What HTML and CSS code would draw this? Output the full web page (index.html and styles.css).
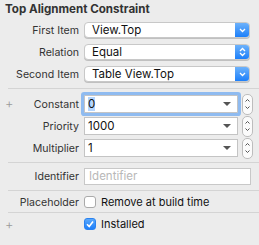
FILE: index.html
```html
<!DOCTYPE html>
<html lang="en">
<head>
    <meta charset="UTF-8">
    <title>Top Alignment Constraint</title>
    <link rel="stylesheet" href="styles.css">
</head>
<body>

    <div class="panel">
        <div class="title">Top Alignment Constraint</div>

        <div class="row pop-row">
            <div class="lbl"><span></span><span>First Item</span></div>
            <div class="popup">
                <span class="val">View.Top</span>
                <span class="pbtn"><svg width="7" height="5" viewBox="0 0 7 5"><path d="M1 1 L3.5 3.5 L6 1" fill="none" stroke="#fff" stroke-width="1.3"/></svg></span>
            </div>
        </div>

        <div class="row pop-row">
            <div class="lbl"><span></span><span>Relation</span></div>
            <div class="popup">
                <span class="val">Equal</span>
                <span class="pbtn"><svg width="7" height="10" viewBox="0 0 7 10"><path d="M1 4 L3.5 1.5 L6 4 M1 6 L3.5 8.5 L6 6" fill="none" stroke="#fff" stroke-width="1.3"/></svg></span>
            </div>
        </div>

        <div class="row pop-row">
            <div class="lbl"><span></span><span>Second Item</span></div>
            <div class="popup">
                <span class="val">Table View.Top</span>
                <span class="pbtn"><svg width="7" height="5" viewBox="0 0 7 5"><path d="M1 1 L3.5 3.5 L6 1" fill="none" stroke="#fff" stroke-width="1.3"/></svg></span>
            </div>
        </div>

        <div class="sep"></div>

        <div class="row combo-row">
            <div class="lbl"><span class="plus">+</span><span>Constant</span></div>
            <div class="combo focus">
                <span class="val"><span class="sel">0</span></span>
                <span class="tri"></span>
            </div>
            <div class="stepper"><svg width="9" height="18" viewBox="0 0 9 18"><path d="M2.5 6.5 L4.5 4.5 L6.5 6.5 M2.5 11.5 L4.5 13.5 L6.5 11.5" fill="none" stroke="#555" stroke-width="1"/></svg></div>
        </div>

        <div class="row combo-row">
            <div class="lbl"><span></span><span>Priority</span></div>
            <div class="combo">
                <span class="val">1000</span>
                <span class="tri"></span>
            </div>
            <div class="stepper"><svg width="9" height="18" viewBox="0 0 9 18"><path d="M2.5 6.5 L4.5 4.5 L6.5 6.5 M2.5 11.5 L4.5 13.5 L6.5 11.5" fill="none" stroke="#555" stroke-width="1"/></svg></div>
        </div>

        <div class="row combo-row">
            <div class="lbl"><span></span><span>Multiplier</span></div>
            <div class="combo">
                <span class="val">1</span>
                <span class="tri"></span>
            </div>
            <div class="stepper"><svg width="9" height="18" viewBox="0 0 9 18"><path d="M2.5 6.5 L4.5 4.5 L6.5 6.5 M2.5 11.5 L4.5 13.5 L6.5 11.5" fill="none" stroke="#555" stroke-width="1"/></svg></div>
        </div>

        <div class="sep"></div>

        <div class="row text-row">
            <div class="lbl"><span></span><span>Identifier</span></div>
            <div class="field">Identifier</div>
        </div>

        <div class="sep"></div>

        <div class="row check-row">
            <div class="lbl"><span></span><span>Placeholder</span></div>
            <span class="box"></span>
            <span class="ctext">Remove at build time</span>
        </div>

        <div class="sep"></div>

        <div class="row check-row">
            <div class="lbl"><span class="plus">+</span><span></span></div>
            <span class="box on"><svg width="10" height="10" viewBox="0 0 10 10"><path d="M2 5.2 L4.2 7.5 L8 2.5" fill="none" stroke="#fff" stroke-width="1.6"/></svg></span>
            <span class="ctext">Installed</span>
        </div>
    </div>

</body>
</html>
```

FILE: styles.css
```css
body { margin: 0; background-color: #ececec; font-family: Inter, "Liberation Sans", Arial, sans-serif; font-size: 11px; color: #222; }
.panel { width: 259px; height: 245px; }
.title { font-weight: bold; font-size: 11.6px; padding: 3px 0 0 5px; height: 19px; line-height: 13px; color: #333; }
.row { display: flex; align-items: center; }
.lbl { width: 79px; flex: none; display: flex; justify-content: space-between; padding-left: 5px; box-sizing: border-box; margin-right: 5px; color: #333; font-size: 10.6px; }
.plus { color: #9a9a9a; font-size: 13px; line-height: 11px; font-weight: 300; }

.pop-row { height: 16px; margin-bottom: 6px; }
.popup { display: flex; width: 166px; height: 16px; box-sizing: border-box; background: #fff; border: 1px solid #c8c8c8; border-radius: 4px; box-shadow: 0 1px 0 #c0c0c0; overflow: hidden; }
.popup .val { flex: 1; padding-left: 7px; line-height: 14px; font-size: 11.5px; color: #111; }
.pbtn { width: 14px; display: flex; align-items: center; justify-content: center; background: linear-gradient(#6db2fb, #1c7ffa); }

.sep { height: 1px; background-color: #d4d4d4; margin: 4px 0 5px 8px; }

.combo-row { height: 20px; margin-bottom: 2px; }
.combo { display: flex; align-items: center; width: 154px; height: 18px; box-sizing: border-box; background: #fff; border: 1px solid #c4c4c4; }
.combo.focus { box-shadow: 0 0 0 3px #8fbbf0; border-radius: 1px; }
.combo .val { flex: 1; padding-left: 3px; font-size: 11.5px; color: #111; line-height: 16px; }
.sel { background-color: #b4d5fe; }
.tri { width: 0; height: 0; border-left: 4px solid transparent; border-right: 4px solid transparent; border-top: 4px solid #555; margin-right: 6px; }
.stepper { margin-left: 4px; width: 9px; height: 19px; border: 1px solid #bdbdbd; border-radius: 5px; background: #fbfbfb; display: flex; align-items: center; justify-content: center; }

.text-row { height: 17px; margin-bottom: 5px; }
.field { width: 167px; height: 17px; box-sizing: border-box; background: #fff; border: 1px solid #c8c8c8; color: #b8b8b8; padding-left: 4px; line-height: 15px; font-size: 11.5px; }

.check-row { height: 12px; margin: 5px 0 4px; }
.box { width: 12px; height: 12px; box-sizing: border-box; border: 1px solid #aaa; border-radius: 3px; background: #fff; display: flex; align-items: center; justify-content: center; }
.box.on { background: linear-gradient(#5aa8fb, #1d7ffa); border-color: #2a82f0; }
.ctext { margin-left: 5px; font-size: 11px; color: #111; }
```
